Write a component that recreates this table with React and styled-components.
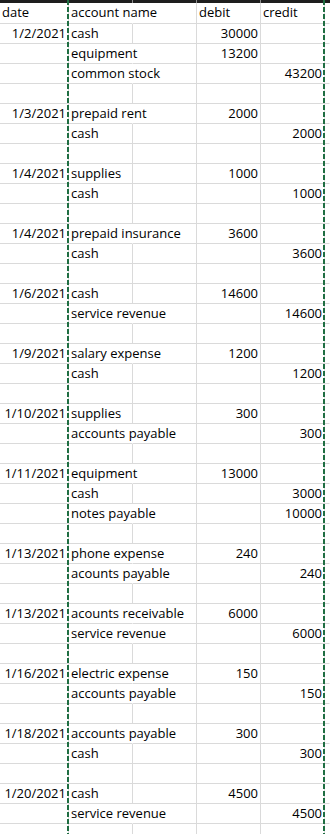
import React from 'react';
import styled, { createGlobalStyle } from 'styled-components';

const GlobalStyle = createGlobalStyle`
  html, body {
    margin: 0;
    padding: 0;
    background: #fff;
  }
  #root {
    width: 330px;
    height: 834px;
    overflow: hidden;
  }
`;

// journal entries, one block per date
const entries = [
  { date: '1/2/2021', lines: [['cash', 30000], ['equipment', 13200], ['common stock', null, 43200]] },
  { date: '1/3/2021', lines: [['prepaid rent', 2000], ['cash', null, 2000]] },
  { date: '1/4/2021', lines: [['supplies', 1000], ['cash', null, 1000]] },
  { date: '1/4/2021', lines: [['prepaid insurance', 3600], ['cash', null, 3600]] },
  { date: '1/6/2021', lines: [['cash', 14600], ['service revenue', null, 14600]] },
  { date: '1/9/2021', lines: [['salary expense', 1200], ['cash', null, 1200]] },
  { date: '1/10/2021', lines: [['supplies', 300], ['accounts payable', null, 300]] },
  { date: '1/11/2021', lines: [['equipment', 13000], ['cash', null, 3000], ['notes payable', null, 10000]] },
  { date: '1/13/2021', lines: [['phone expense', 240], ['acounts payable', null, 240]] },
  { date: '1/13/2021', lines: [['acounts receivable', 6000], ['service revenue', null, 6000]] },
  { date: '1/16/2021', lines: [['electric expense', 150], ['accounts payable', null, 150]] },
  { date: '1/18/2021', lines: [['accounts payable', 300], ['cash', null, 300]] },
  { date: '1/20/2021', lines: [['cash', 4500], ['service revenue', null, 4500]] },
];

const buildRows = () => {
  const rows = [];
  entries.forEach((entry) => {
    entry.lines.forEach(([account, debit, credit], i) => {
      rows.push({ date: i === 0 ? entry.date : '', account, debit, credit });
    });
    rows.push({ date: '', account: '', debit: null, credit: null });
  });
  // a few spare rows past the bottom edge
  for (let i = 0; i < 3; i++) rows.push({ date: '', account: '', debit: null, credit: null });
  return rows;
};

function App() {
  const rows = buildRows();

  return (
    <>
      <GlobalStyle />
      <Sheet>
        <TopBar>
          <BarCell />
          <BarCell />
          <BarCell />
          <BarCell />
          <BarCell />
          <BarCell $last />
        </TopBar>
        <Row $header>
          <Cell>date</Cell>
          <Cell $spill>account name</Cell>
          <Cell />
          <Cell>debit</Cell>
          <Cell>credit</Cell>
          <Cell $last />
        </Row>
        {rows.map((row, idx) => (
          <Row key={idx}>
            <Cell $right>{row.date}</Cell>
            <Cell $spill={row.account.length > 8}>{row.account}</Cell>
            <Cell />
            <Cell $right>{row.debit}</Cell>
            <Cell $right>{row.credit}</Cell>
            <Cell $last />
          </Row>
        ))}
        <PageBreak $left={67} />
        <PageBreak $left={323} />
      </Sheet>
    </>
  );
}

const columns = '69px 64px 64px 64px 64px 1fr';

const Sheet = styled.div`
  position: relative;
  width: 330px;
  background: #fff;
  font: 400 13px 'Open Sans', 'Liberation Sans', Arial, sans-serif;
  color: #000;
`;

const TopBar = styled.div`
  display: grid;
  grid-template-columns: ${columns};
  height: 3px;
  background: #1e1e1e;
`;

const BarCell = styled.div`
  border-right: 1px solid ${(p) => (p.$last ? 'transparent' : '#8c8c8c')};
`;

const Row = styled.div`
  display: grid;
  grid-template-columns: ${columns};
  height: ${(p) => (p.$header ? '21px' : '20px')};
  box-sizing: border-box;
`;

const Cell = styled.div`
  box-sizing: border-box;
  min-width: 0;
  border-right: 1px solid ${(p) => (p.$spill || p.$last ? 'transparent' : '#dadada')};
  border-bottom: 1px solid #dadada;
  padding: 0 2px;
  line-height: 19px;
  white-space: nowrap;
  overflow: visible;
  text-align: ${(p) => (p.$right ? 'right' : 'left')};
`;

const PageBreak = styled.div`
  position: absolute;
  top: 0;
  bottom: 0;
  left: ${(p) => p.$left}px;
  width: 2px;
  background: repeating-linear-gradient(
    to bottom,
    #1f6e42 0,
    #1f6e42 5px,
    transparent 5px,
    transparent 7px
  );
`;

export default App;
